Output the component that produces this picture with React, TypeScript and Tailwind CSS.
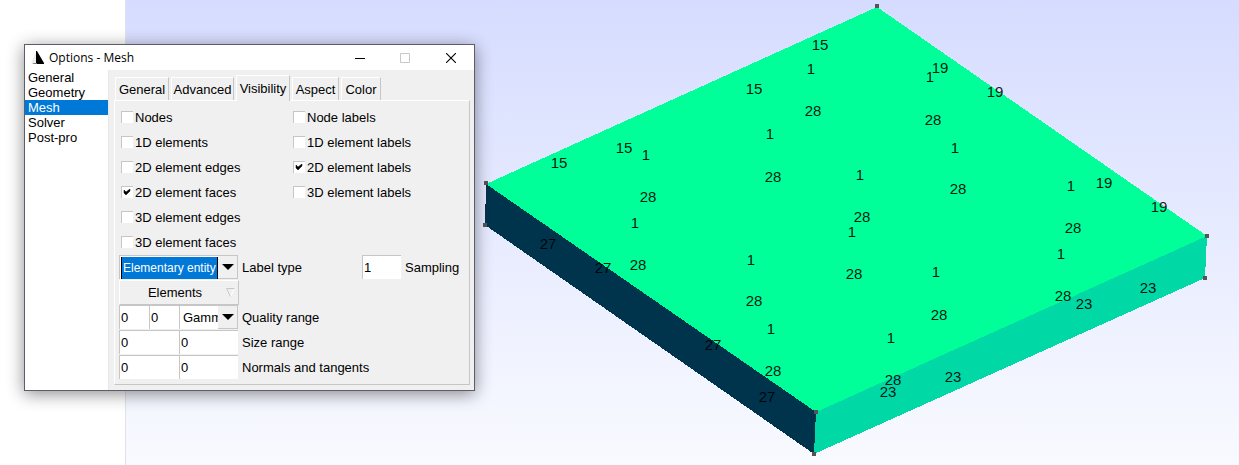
import React, { useState } from "react";

type Point = [number, number];

const faceLabels: { text: string; at: Point[] }[] = [
  { text: "15", at: [[820, 45], [754, 89], [624, 148], [559, 163]] },
  {
    text: "1",
    at: [
      [811, 69], [930, 77], [770, 134], [646, 155], [955, 148], [860, 175], [1071, 186],
      [635, 223], [852, 232], [751, 260], [1061, 254], [936, 272], [771, 329], [891, 338],
    ],
  },
  {
    text: "28",
    at: [
      [813, 111], [933, 120], [773, 177], [648, 197], [958, 189], [862, 217], [1073, 228],
      [638, 265], [854, 274], [754, 301], [1063, 296], [939, 315], [773, 371], [893, 380],
    ],
  },
  { text: "19", at: [[940, 68], [995, 92], [1104, 183], [1159, 207]] },
  { text: "27", at: [[548, 244], [603, 268], [713, 345], [767, 397]] },
  { text: "23", at: [[1148, 288], [1084, 304], [953, 377], [888, 392]] },
];

const corners: Point[] = [
  [877, 6], [486, 183], [485, 225], [816, 412], [814, 454], [1207, 236], [1205, 278],
];

function ModelView() {
  return (
    <svg
      className="block h-full w-full"
      viewBox="126 0 1113 465"
      preserveAspectRatio="xMinYMin meet"
      role="img"
      aria-label="Mesh model"
    >
      <g shapeRendering="crispEdges">
        <polygon points="486,184 816,412 814,454 485,225" fill="#00344d" />
        <polygon points="816,412 1207,236 1205,278 814,454" fill="#00d9a6" />
        <polygon points="877,7 1207,236 816,412 486,184" fill="#00ff99" />
        {corners.map(([x, y]) => (
          <rect key={`${x}-${y}`} x={x - 2} y={y - 2} width="4" height="4" fill="#555555" />
        ))}
      </g>
      <g className="text-[15px]" textAnchor="middle" fill="#000000" fillOpacity="0.9">
        {faceLabels.map(({ text, at }) =>
          at.map(([x, y]) => (
            <text key={`${x}-${y}`} x={x} y={y + 5}>
              {text}
            </text>
          ))
        )}
      </g>
    </svg>
  );
}

function Check({ label, on = false }: { label: string; on?: boolean }) {
  const [checked, setChecked] = useState(on);
  return (
    <label className="flex h-[25px] items-center gap-0.5 pb-px pl-0.5">
      <span className="grid size-3">
        <input
          type="checkbox"
          checked={checked}
          onChange={() => setChecked(!checked)}
          className="col-start-1 row-start-1 size-3 appearance-none border-t border-l border-[#c6c6c6] bg-white"
        />
        {checked && (
          <svg viewBox="0 0 12 12" className="pointer-events-none col-start-1 row-start-1 size-3">
            <path d="M3 4v3l2 2 4-4V3L5 6z" fill="#000" stroke="#000" strokeWidth="0.5" />
          </svg>
        )}
      </span>
      {label}
    </label>
  );
}

function Field({ label, value, className }: { label: string; value: string; className: string }) {
  return (
    <input
      aria-label={label}
      defaultValue={value}
      className={`h-6 self-start rounded-none border-t border-l border-[#c6c6c6] bg-white pl-px outline-none ${className}`}
    />
  );
}

function Arrow() {
  return (
    <span className="pointer-events-none flex w-5 items-center justify-center border-r border-b border-[#c6c6c6] bg-[#f0f0f0]">
      <svg viewBox="0 0 12 6" className="h-1.5 w-3">
        <path d="M0 0h12L6 6z" fill="#000" />
      </svg>
    </span>
  );
}

const sections = ["General", "Geometry", "Mesh", "Solver", "Post-pro"];

const tabs = [
  { name: "General", width: "w-[54px]" },
  { name: "Advanced", width: "w-[63px]" },
  { name: "Visibility", width: "w-[54px]" },
  { name: "Aspect", width: "w-[47px]" },
  { name: "Color", width: "w-[40px]" },
];

function OptionsWindow() {
  return (
    <section
      aria-label="Options - Mesh"
      className="absolute top-11 left-6 flex w-[451px] flex-col border border-[#5d5d6a] bg-[#f0f0f0] shadow-[0_3px_16px_rgba(0,0,0,0.45)]"
    >
      <header className="flex h-[25px] items-center bg-white pl-1.5">
        <svg viewBox="0 0 14 14" className="size-3.5">
          <path d="M5 1L0 12l5 1z" fill="#ededed" />
          <path d="M5 0h1l7 12v1H5z" fill="#000" />
          <path d="M1 12h5v1H3z" fill="#777" />
        </svg>
        <h1 className="ml-1 grow font-['Open_Sans',sans-serif] text-[12px] leading-4">Options - Mesh</h1>
        <button type="button" aria-label="Minimize" className="flex h-full w-[45px] items-center justify-center">
          <svg viewBox="0 0 10 10" className="size-2.5">
            <path d="M0 5.5h10" stroke="#000" />
          </svg>
        </button>
        <button type="button" aria-label="Maximize" disabled className="flex h-full w-[45px] items-center justify-center">
          <svg viewBox="0 0 10 10" className="size-2.5">
            <path d="M.5.5h9v9h-9z" fill="none" stroke="#c8c8c8" />
          </svg>
        </button>
        <button type="button" aria-label="Close" className="flex h-full w-[47px] items-center justify-center">
          <svg viewBox="0 0 10 10" className="size-2.5">
            <path d="M0 0l10 10M10 0L0 10" stroke="#000" strokeWidth="1.1" />
          </svg>
        </button>
      </header>

      <div className="flex text-[13px] leading-[15px]">
        <ul className="w-[84px] border-r border-[#e6e6e6] bg-white">
          {sections.map((name) => (
            <li key={name}>
              <button
                type="button"
                className={`block w-full pl-[3px] text-left ${name === "Mesh" ? "bg-[#0078d7] text-white" : ""}`}
              >
                {name}
              </button>
            </li>
          ))}
        </ul>

        <div className="grow pt-[5px] pr-1 pb-[5px] pl-[5px]">
          <div role="tablist" className="flex h-[25px] items-end gap-0.5 pl-px">
            {tabs.map(({ name, width }) => (
              <button
                key={name}
                type="button"
                role="tab"
                aria-selected={name === "Visibility"}
                className={`border-t border-r border-l border-t-white border-r-[#c6c6c6] border-l-white text-center whitespace-nowrap ${width} ${
                  name === "Visibility" ? "-mb-px h-[26px] bg-[#f0f0f0]" : "h-[23px]"
                }`}
              >
                {name}
              </button>
            ))}
          </div>

          <div className="border border-t-white border-r-[#c6c6c6] border-b-[#c6c6c6] border-l-white p-1">
            <div className="grid grid-cols-[172px_1fr]">
              <div>
                <Check label="Nodes" />
                <Check label="1D elements" />
                <Check label="2D element edges" />
                <Check label="2D element faces" on />
                <Check label="3D element edges" />
                <Check label="3D element faces" />
              </div>
              <div>
                <Check label="Node labels" />
                <Check label="1D element labels" />
                <Check label="2D element labels" on />
                <Check label="3D element labels" />
              </div>
            </div>

            <div className="flex h-[25px] items-center">
              <div className="flex h-6 w-[119px] self-start border-t border-l border-[#c6c6c6] bg-white">
                <select
                  id="label-type"
                  className="mt-px ml-px w-[97px] appearance-none rounded-none border-x border-black bg-[#0078d7] pl-px text-[12px] text-white outline-none"
                >
                  <option>Elementary entity</option>
                </select>
                <Arrow />
              </div>
              <label htmlFor="label-type" className="ml-1 w-[120px]">
                Label type
              </label>
              <Field label="Sampling" value="1" className="w-[39px]" />
              <span className="ml-1">Sampling</span>
            </div>

            <button
              type="button"
              className="flex h-[25px] w-[120px] items-center border border-t-white border-r-[#c6c6c6] border-b-[#c6c6c6] border-l-white"
            >
              <span className="ml-1 grow text-center">Elements</span>
              <svg viewBox="0 0 9 9" className="mr-[3px] size-[9px]">
                <path d="M8.5.5L4.5 8.5.5.5" fill="none" stroke="#fff" />
                <path d="M8.5.5H.5l4 8" fill="none" stroke="#c6c6c6" />
              </svg>
            </button>

            <div className="flex h-[25px] items-center">
              <Field label="Quality range minimum" value="0" className="w-[30px]" />
              <Field label="Quality range maximum" value="0" className="w-[30px]" />
              <div className="flex h-6 w-[59px] self-start border-t border-l border-[#c6c6c6] bg-white">
                <select
                  id="quality"
                  className="w-[38px] appearance-none overflow-hidden rounded-none bg-white pl-[3px] outline-none"
                >
                  <option>Gamma</option>
                </select>
                <Arrow />
              </div>
              <label htmlFor="quality" className="ml-1">
                Quality range
              </label>
            </div>

            {["Size range", "Normals and tangents"].map((name) => (
              <div key={name} className="flex h-[25px] items-center">
                <Field label={`${name}, first value`} value="0" className="w-[60px]" />
                <Field label={`${name}, second value`} value="0" className="w-[59px]" />
                <span className="ml-1">{name}</span>
              </div>
            ))}
          </div>
        </div>
      </div>
    </section>
  );
}

export default function App() {
  return (
    <main className="relative flex h-screen min-h-[400px] overflow-hidden bg-white font-['Liberation_Sans',Arial,sans-serif] text-black">
      <aside className="w-[126px] shrink-0 border-r border-[#e2e2ec] bg-white" />
      <div className="min-w-0 grow bg-linear-to-b from-[#d6dcff] to-[#f9faff]">
        <ModelView />
      </div>
      <OptionsWindow />
    </main>
  );
}
